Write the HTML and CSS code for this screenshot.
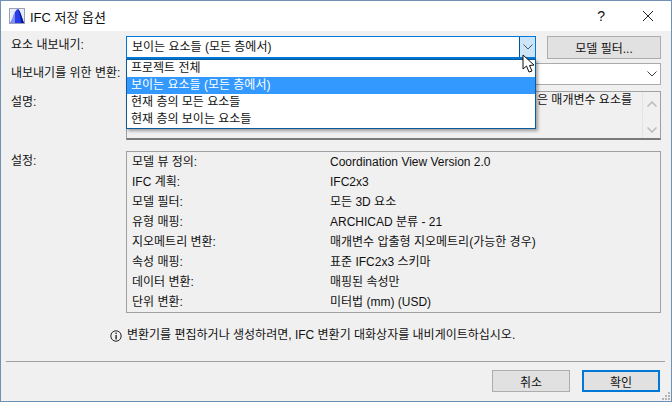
FILE: index.html
```html
<!DOCTYPE html>
<html>
  <head>
    <meta charset="utf-8">
    <link rel="stylesheet" href="styles.css">
    <title>IFC 저장 옵션</title>
  </head>
  <body>
    <div class="window">
      <div class="titlebar">
        <svg class="app-icon" width="16" height="16" viewBox="0 0 16 16">
          <rect x="0.5" y="0.5" width="15" height="15" fill="#e8ecf8" stroke="#9aa0b8"/>
          <path d="M1 15 C4 13 5 2 9 1 C11 2 13 10 15 15 Z" fill="#2a3ce8"/>
          <path d="M1 15 C3 13 4 7 6 4 L6 15 Z" fill="#7f8ff4"/>
          <path d="M9 1 C11 2 13 10 15 15 L12 15 C12 10 10 4 9 1 Z" fill="#0a1a90"/>
        </svg>
        <span class="title-text">IFC 저장 옵션</span>
        <span class="help-btn">?</span>
        <svg class="close-btn" width="12" height="12" viewBox="0 0 12 12">
          <path d="M1 1 L11 11 M11 1 L1 11" stroke="#222" stroke-width="1" fill="none"/>
        </svg>
      </div>

      <div class="content">
        <div class="form-row row-export">
          <label>요소 내보내기:</label>
          <div class="field-group">
            <div class="combo combo-open">
              <span class="combo-text">보이는 요소들 (모든 층에서)</span>
              <span class="combo-arrow combo-arrow-hot">
                <svg width="10" height="6" viewBox="0 0 10 6"><path d="M0.5 0.5 L5 5 L9.5 0.5" stroke="#4a5560" fill="none"/></svg>
              </span>
            </div>
            <button class="btn btn-filter">모델 필터...</button>
          </div>
          <ul class="dropdown-list">
            <li>프로젝트 전체</li>
            <li class="selected">보이는 요소들 (모든 층에서)</li>
            <li>현재 층의 모든 요소들</li>
            <li>현재 층의 보이는 요소들</li>
          </ul>
          <svg class="cursor" width="14" height="22" viewBox="0 0 14 22">
            <path d="M1 1 L1 15 L4.5 12 L7 18 L10 17 L7.5 11.5 L12 11 Z" fill="#fff" stroke="#111" stroke-width="1"/>
          </svg>
        </div>

        <div class="form-row row-translator">
          <label>내보내기를 위한 변환:</label>
          <div class="combo combo-plain">
            <span class="combo-arrow">
              <svg width="10" height="6" viewBox="0 0 10 6"><path d="M0.5 0.5 L5 5 L9.5 0.5" stroke="#444" fill="none"/></svg>
            </span>
          </div>
        </div>

        <div class="form-row row-desc">
          <label>설명:</label>
          <div class="desc-box">
            <p class="desc-text">은 매개변수 요소를</p>
            <div class="desc-scroll">
              <svg width="10" height="6" viewBox="0 0 10 6"><path d="M0.5 5.5 L5 1 L9.5 5.5" stroke="#bbb" stroke-width="1.5" fill="none"/></svg>
              <svg width="10" height="6" viewBox="0 0 10 6"><path d="M0.5 0.5 L5 5 L9.5 0.5" stroke="#bbb" stroke-width="1.5" fill="none"/></svg>
            </div>
          </div>
        </div>

        <div class="form-row row-settings">
          <label>설정:</label>
          <div class="settings-box">
            <span>모델 뷰 정의:</span><span>Coordination View Version 2.0</span>
            <span>IFC 계획:</span><span>IFC2x3</span>
            <span>모델 필터:</span><span>모든 3D 요소</span>
            <span>유형 매핑:</span><span>ARCHICAD 분류 - 21</span>
            <span>지오메트리 변환:</span><span>매개변수 압출형 지오메트리(가능한 경우)</span>
            <span>속성 매핑:</span><span>표준 IFC2x3 스키마</span>
            <span>데이터 변환:</span><span>매핑된 속성만</span>
            <span>단위 변환:</span><span>미터법 (mm) (USD)</span>
          </div>
        </div>

        <div class="info-line">
          <svg width="12" height="12" viewBox="0 0 12 12">
            <circle cx="6" cy="6" r="5.2" fill="none" stroke="#222" stroke-width="1"/>
            <rect x="5.4" y="2.6" width="1.4" height="1.4" fill="#222"/>
            <rect x="5.4" y="5" width="1.4" height="4.4" fill="#222"/>
          </svg>
          <span>변환기를 편집하거나 생성하려면, IFC 변환기 대화상자를 내비게이트하십시오.</span>
        </div>
      </div>

      <div class="footer">
        <button class="btn btn-footer">취소</button>
        <button class="btn btn-footer btn-default">확인</button>
      </div>
      <svg class="grip" width="10" height="10" viewBox="0 0 10 10" fill="#b5b5b5">
        <rect x="7" y="1" width="2" height="2"/>
        <rect x="4" y="4" width="2" height="2"/><rect x="7" y="4" width="2" height="2"/>
        <rect x="1" y="7" width="2" height="2"/><rect x="4" y="7" width="2" height="2"/><rect x="7" y="7" width="2" height="2"/>
      </svg>
    </div>
  </body>
</html>
```

FILE: styles.css
```css
* {
  box-sizing: border-box;
}
html, body {
  margin: 0;
  padding: 0;
}
body {
  font-family: "Liberation Sans", "Noto Sans CJK KR", sans-serif;
  font-size: 12px;
  color: #111;
}

.window {
  position: relative;
  width: 672px;
  height: 402px;
  border: 1px solid #6f91b3;
  background-color: #f0f0f0;
  display: flex;
  flex-direction: column;
  overflow: hidden;
}

.titlebar {
  height: 30px;
  background-color: #fff;
  display: flex;
  align-items: center;
  padding-left: 8px;
  flex: none;
}
.app-icon {
  margin-right: 5px;
}
.title-text {
  font-size: 13px;
  flex: 1;
}
.help-btn {
  font-size: 14px;
  margin-right: 37px;
}
.close-btn {
  margin-right: 17px;
}

.content {
  flex: 1;
  padding: 5px 10px 0 10px;
  display: flex;
  flex-direction: column;
}
.form-row {
  display: grid;
  grid-template-columns: 115px 1fr;
  position: relative;
}
.form-row label {
  line-height: 18px;
  white-space: nowrap;
}

.field-group {
  display: flex;
  gap: 11px;
}
.combo {
  display: flex;
  align-items: stretch;
  justify-content: space-between;
  background-color: #fff;
}
.combo-open {
  width: 410px;
  height: 23px;
  border: 1px solid #0078d7;
  border-bottom-width: 2px;
  line-height: 20px;
  padding-left: 5px;
}
.combo-arrow {
  width: 16px;
  display: flex;
  align-items: center;
  justify-content: center;
}
.combo-arrow-hot {
  background-color: #cce4f7;
  border-left: 1px solid #005499;
}
.combo-plain {
  height: 22px;
  border: 1px solid #ababab;
}
.combo-plain .combo-arrow {
  margin-left: auto;
}

.btn {
  font-family: inherit;
  font-size: 12px;
  color: #111;
  background-color: #e1e1e1;
  border: 1px solid #adadad;
  padding: 0;
}
.btn-filter {
  width: 114px;
  height: 23px;
}

.dropdown-list {
  position: absolute;
  left: 115px;
  top: 23px;
  width: 410px;
  height: 70px;
  margin: 0;
  padding: 0;
  list-style: none;
  background-color: #fff;
  border: 1px solid #0a5a9c;
  box-shadow: 2px 2px 3px rgba(0, 0, 0, 0.35);
  z-index: 2;
}
.dropdown-list li {
  height: 17px;
  line-height: 17px;
  padding-left: 4px;
}
.dropdown-list .selected {
  background-color: #3399ff;
  color: #fff;
}
.cursor {
  position: absolute;
  left: 511px;
  top: 18px;
  z-index: 3;
}

.row-translator {
  margin-top: 4px;
}
.row-translator label {
  line-height: 20px;
}

.row-desc {
  margin-top: 6px;
}
.row-desc label {
  line-height: 22px;
}
.desc-box {
  height: 49px;
  border: 1px solid #a0a0a0;
  border-bottom-color: #7a7a7a;
  border-bottom-width: 2px;
  display: flex;
  justify-content: space-between;
}
.desc-text {
  margin: 0;
  padding-left: 410px;
  line-height: 17px;
  white-space: nowrap;
}
.desc-scroll {
  width: 18px;
  background-color: #f0f0f0;
  border-left: 1px solid #e4e4e4;
  display: flex;
  flex-direction: column;
  justify-content: space-between;
  align-items: center;
  padding: 9px 0 5px;
}

.row-settings {
  margin-top: 11px;
}
.row-settings label {
  line-height: 20px;
}
.settings-box {
  height: 162px;
  border: 1px solid #a0a0a0;
  padding-left: 5px;
  display: grid;
  grid-template-columns: 198px 1fr;
  grid-auto-rows: 20px;
  line-height: 20px;
}

.info-line {
  margin-top: 14px;
  display: flex;
  align-items: center;
  justify-content: flex-start;
  gap: 5px;
  padding-left: 99px;
  line-height: 17px;
}

.footer {
  flex: none;
  height: 40px;
  margin: 0 6px 0 5px;
  border-top: 1px solid #a0a0a0;
  display: flex;
  justify-content: flex-end;
  gap: 12px;
  padding: 8px 5px 0 0;
}
.btn-footer {
  width: 78px;
  height: 22px;
}
.btn-default {
  border: 2px solid #0078d7;
}
.grip {
  position: absolute;
  right: 0;
  bottom: 0;
}
```
